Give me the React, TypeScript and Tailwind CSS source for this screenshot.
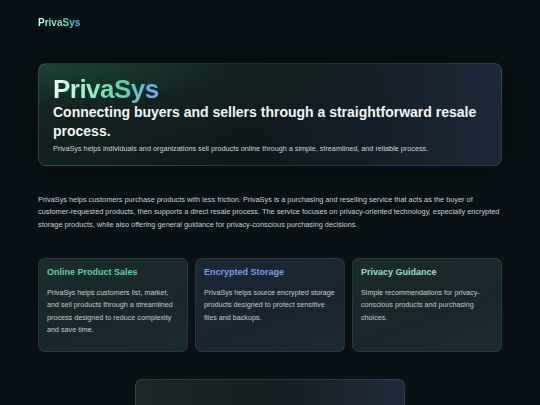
import React from "react";

const cards = [
  {
    title: "Online Product Sales",
    color: "text-[#5dd39b]",
    bg: "bg-[linear-gradient(160deg,#1a2c2c_0%,#17262a_60%,#1b2a2e_100%)]",
    body: "PrivaSys helps customers list, market, and sell products through a streamlined process designed to reduce complexity and save time.",
  },
  {
    title: "Encrypted Storage",
    color: "text-[#7a9de6]",
    bg: "bg-[linear-gradient(160deg,#1b2836_0%,#18242f_60%,#1c2a36_100%)]",
    body: "PrivaSys helps source encrypted storage products designed to protect sensitive files and backups.",
  },
  {
    title: "Privacy Guidance",
    color: "text-[#9fdcc3]",
    bg: "bg-[linear-gradient(160deg,#1a2b2b_0%,#17262a_60%,#1b2c2e_100%)]",
    body: "Simple recommendations for privacy-conscious products and purchasing choices.",
  },
];

export default function App() {
  return (
    <div className="min-h-screen bg-[#091116] text-white font-['Liberation_Sans',Arial,sans-serif] overflow-hidden">
      <header className="px-[38px] pt-[16px]">
        <div className="text-[10px] leading-[14px] font-bold bg-[linear-gradient(90deg,#e3fff1_0%,#6ee7b7_50%,#7aa2f7_100%)] bg-clip-text text-transparent w-fit [text-shadow:0_0_8px_rgba(110,231,183,0.15)]">
          PrivaSys
        </div>
      </header>
      <main className="px-[38px]">
        <section className="mt-[33px] rounded-[8px] border border-white/10 bg-[radial-gradient(ellipse_at_0%_0%,#1b4336_0%,rgba(20,40,36,0.6)_30%,rgba(0,0,0,0)_60%),linear-gradient(90deg,#12201f_0%,#0f171b_45%,#151f2a_75%,#1c2838_100%)] px-[14px] pt-[11px] pb-[11px] shadow-[0_0_20px_rgba(0,0,0,0.4)]">
          <h1 className="text-[26px] leading-[28px] font-bold tracking-[-0.02em] bg-[linear-gradient(90deg,#e8fff3_0%,#7fe8b8_45%,#5fd3a4_65%,#7aa2f7_100%)] bg-clip-text text-transparent w-fit">
            PrivaSys
          </h1>
          <h2 className="text-[14px] leading-[19px] font-bold text-[#f2f5f7]">
            Connecting buyers and sellers through a straightforward resale process.
          </h2>
          <p className="mt-[2.5px] text-[7.25px] leading-[10px] text-[#cdd4d8]">
            PrivaSys helps individuals and organizations sell products online through a simple, streamlined, and reliable process.
          </p>
        </section>

        <p className="mt-[28px] text-[7.35px] leading-[12.5px] text-[#c9d0d4]">
          PrivaSys helps customers purchase products with less friction. PrivaSys is a purchasing and reselling service that acts as the buyer of customer-requested products, then supports a direct resale process. The service focuses on privacy-oriented technology, especially encrypted storage products, while also offering general guidance for privacy-conscious purchasing decisions.
        </p>

        <div className="mt-[27px] grid grid-cols-3 gap-[7px]">
          {cards.map((c) => (
            <div
              key={c.title}
              className={`h-[94px] rounded-[7px] border border-white/[0.07] ${c.bg} pl-[8px] pr-[6px] pt-[7px]`}
            >
              <h3 className={`text-[9px] leading-[13px] font-bold ${c.color}`}>{c.title}</h3>
              <p className="mt-[8px] text-[7.2px] leading-[12.3px] text-[#c3cbcf]">{c.body}</p>
            </div>
          ))}
        </div>

        <div className="mx-auto mt-[27px] h-[60px] w-[270px] rounded-t-[7px] border border-white/10 bg-[linear-gradient(90deg,#1e2527_0%,#161d22_55%,#1f2b3b_100%)]" />
      </main>
    </div>
  );
}
